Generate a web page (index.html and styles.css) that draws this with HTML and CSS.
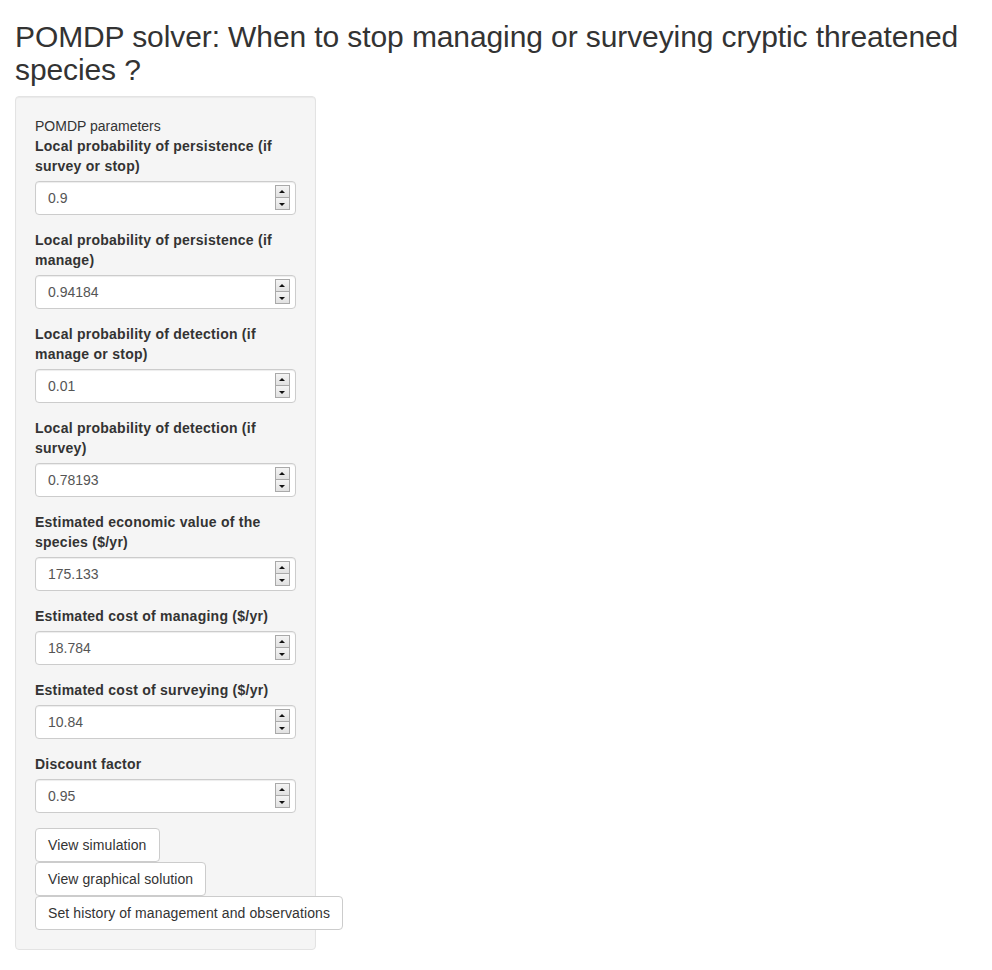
FILE: index.html
```html
<!DOCTYPE html>
<html>
<head>
<meta charset="utf-8">
<title>POMDP solver</title>
<link rel="stylesheet" href="styles.css">
</head>
<body>
<div class="container">
  <h2 class="title">POMDP solver: When to stop managing or surveying cryptic threatened species ?</h2>
  <div class="row">
    <div class="col">
      <form class="well">
        <div class="section">POMDP parameters</div>

        <div class="form-group">
          <label>Local probability of persistence (if survey or stop)</label>
          <div class="field"><input class="form-control" type="text" value="0.9"><span class="spin"><span class="up"></span><span class="down"></span></span></div>
        </div>
        <div class="form-group">
          <label>Local probability of persistence (if manage)</label>
          <div class="field"><input class="form-control" type="text" value="0.94184"><span class="spin"><span class="up"></span><span class="down"></span></span></div>
        </div>
        <div class="form-group">
          <label>Local probability of detection (if manage or stop)</label>
          <div class="field"><input class="form-control" type="text" value="0.01"><span class="spin"><span class="up"></span><span class="down"></span></span></div>
        </div>
        <div class="form-group">
          <label>Local probability of detection (if survey)</label>
          <div class="field"><input class="form-control" type="text" value="0.78193"><span class="spin"><span class="up"></span><span class="down"></span></span></div>
        </div>
        <div class="form-group">
          <label>Estimated economic value of the species ($/yr)</label>
          <div class="field"><input class="form-control" type="text" value="175.133"><span class="spin"><span class="up"></span><span class="down"></span></span></div>
        </div>
        <div class="form-group">
          <label>Estimated cost of managing ($/yr)</label>
          <div class="field"><input class="form-control" type="text" value="18.784"><span class="spin"><span class="up"></span><span class="down"></span></span></div>
        </div>
        <div class="form-group">
          <label>Estimated cost of surveying ($/yr)</label>
          <div class="field"><input class="form-control" type="text" value="10.84"><span class="spin"><span class="up"></span><span class="down"></span></span></div>
        </div>
        <div class="form-group">
          <label>Discount factor</label>
          <div class="field"><input class="form-control" type="text" value="0.95"><span class="spin"><span class="up"></span><span class="down"></span></span></div>
        </div>

        <div class="buttons">
          <button type="button" class="btn">View simulation</button>
          <button type="button" class="btn">View graphical solution</button>
          <button type="button" class="btn">Set history of management and observations</button>
        </div>
      </form>
    </div>
  </div>
</div>
</body>
</html>
```

FILE: styles.css
```css
* { box-sizing: border-box; }
html, body { margin: 0; padding: 0; }
body {
  font-family: "Liberation Sans", Arial, sans-serif;
  font-size: 14px;
  line-height: 1.42857143;
  color: #333;
  background: #fff;
}
.container { padding: 0 15px; }
.title {
  font-size: 30px;
  font-weight: 500;
  line-height: 1.1;
  margin: 20px 0 10px;
  color: #333;
  letter-spacing: -0.1px;
}
.row { display: flex; margin: 0 -15px; }
.col { width: 33.3333%; padding: 0 15px; }
.well {
  margin: 0 0 20px;
  padding: 19px;
  background: #f5f5f5;
  border: 1px solid #e3e3e3;
  border-radius: 4px;
  box-shadow: inset 0 1px 1px rgba(0,0,0,.05);
}
.section { line-height: 20px; }
.form-group { margin-bottom: 15px; }
.form-group label {
  display: block;
  font-weight: bold;
  margin-bottom: 5px;
  max-width: 100%;
  letter-spacing: 0.25px;
}
.field { position: relative; }
.form-control {
  display: block;
  width: 100%;
  height: 34px;
  padding: 6px 12px;
  font-family: inherit;
  font-size: 14px;
  line-height: 1.42857143;
  color: #555;
  background: #fff;
  border: 1px solid #ccc;
  border-radius: 4px;
  box-shadow: inset 0 1px 1px rgba(0,0,0,.075);
  margin: 0;
}
.spin {
  position: absolute;
  right: 6px;
  top: 4px;
  width: 15px;
  height: 25px;
  display: flex;
  flex-direction: column;
  border: 1px solid #a9a9a9;
  background: #ececec;
}
.spin .up, .spin .down {
  flex: 1;
  position: relative;
  background: linear-gradient(#f4f4f4, #e1e1e1);
}
.spin .up { border-bottom: 1px solid #a9a9a9; }
.spin .up::after, .spin .down::after {
  content: "";
  position: absolute;
  left: 50%;
  top: 50%;
  margin-left: -3px;
  border-left: 3px solid transparent;
  border-right: 3px solid transparent;
}
.spin .up::after { border-bottom: 3px solid #111; margin-top: -2px; }
.spin .down::after { border-top: 3px solid #111; margin-top: -1px; }
.buttons { display: flex; flex-direction: column; align-items: flex-start; }
.btn {
  display: inline-block;
  padding: 6px 12px;
  font-family: inherit;
  font-size: 14px;
  line-height: 1.42857143;
  color: #333;
  background: #fff;
  border: 1px solid #ccc;
  border-radius: 4px;
  white-space: nowrap;
  margin: 0;
  cursor: pointer;
  letter-spacing: 0.1px;
}
```
